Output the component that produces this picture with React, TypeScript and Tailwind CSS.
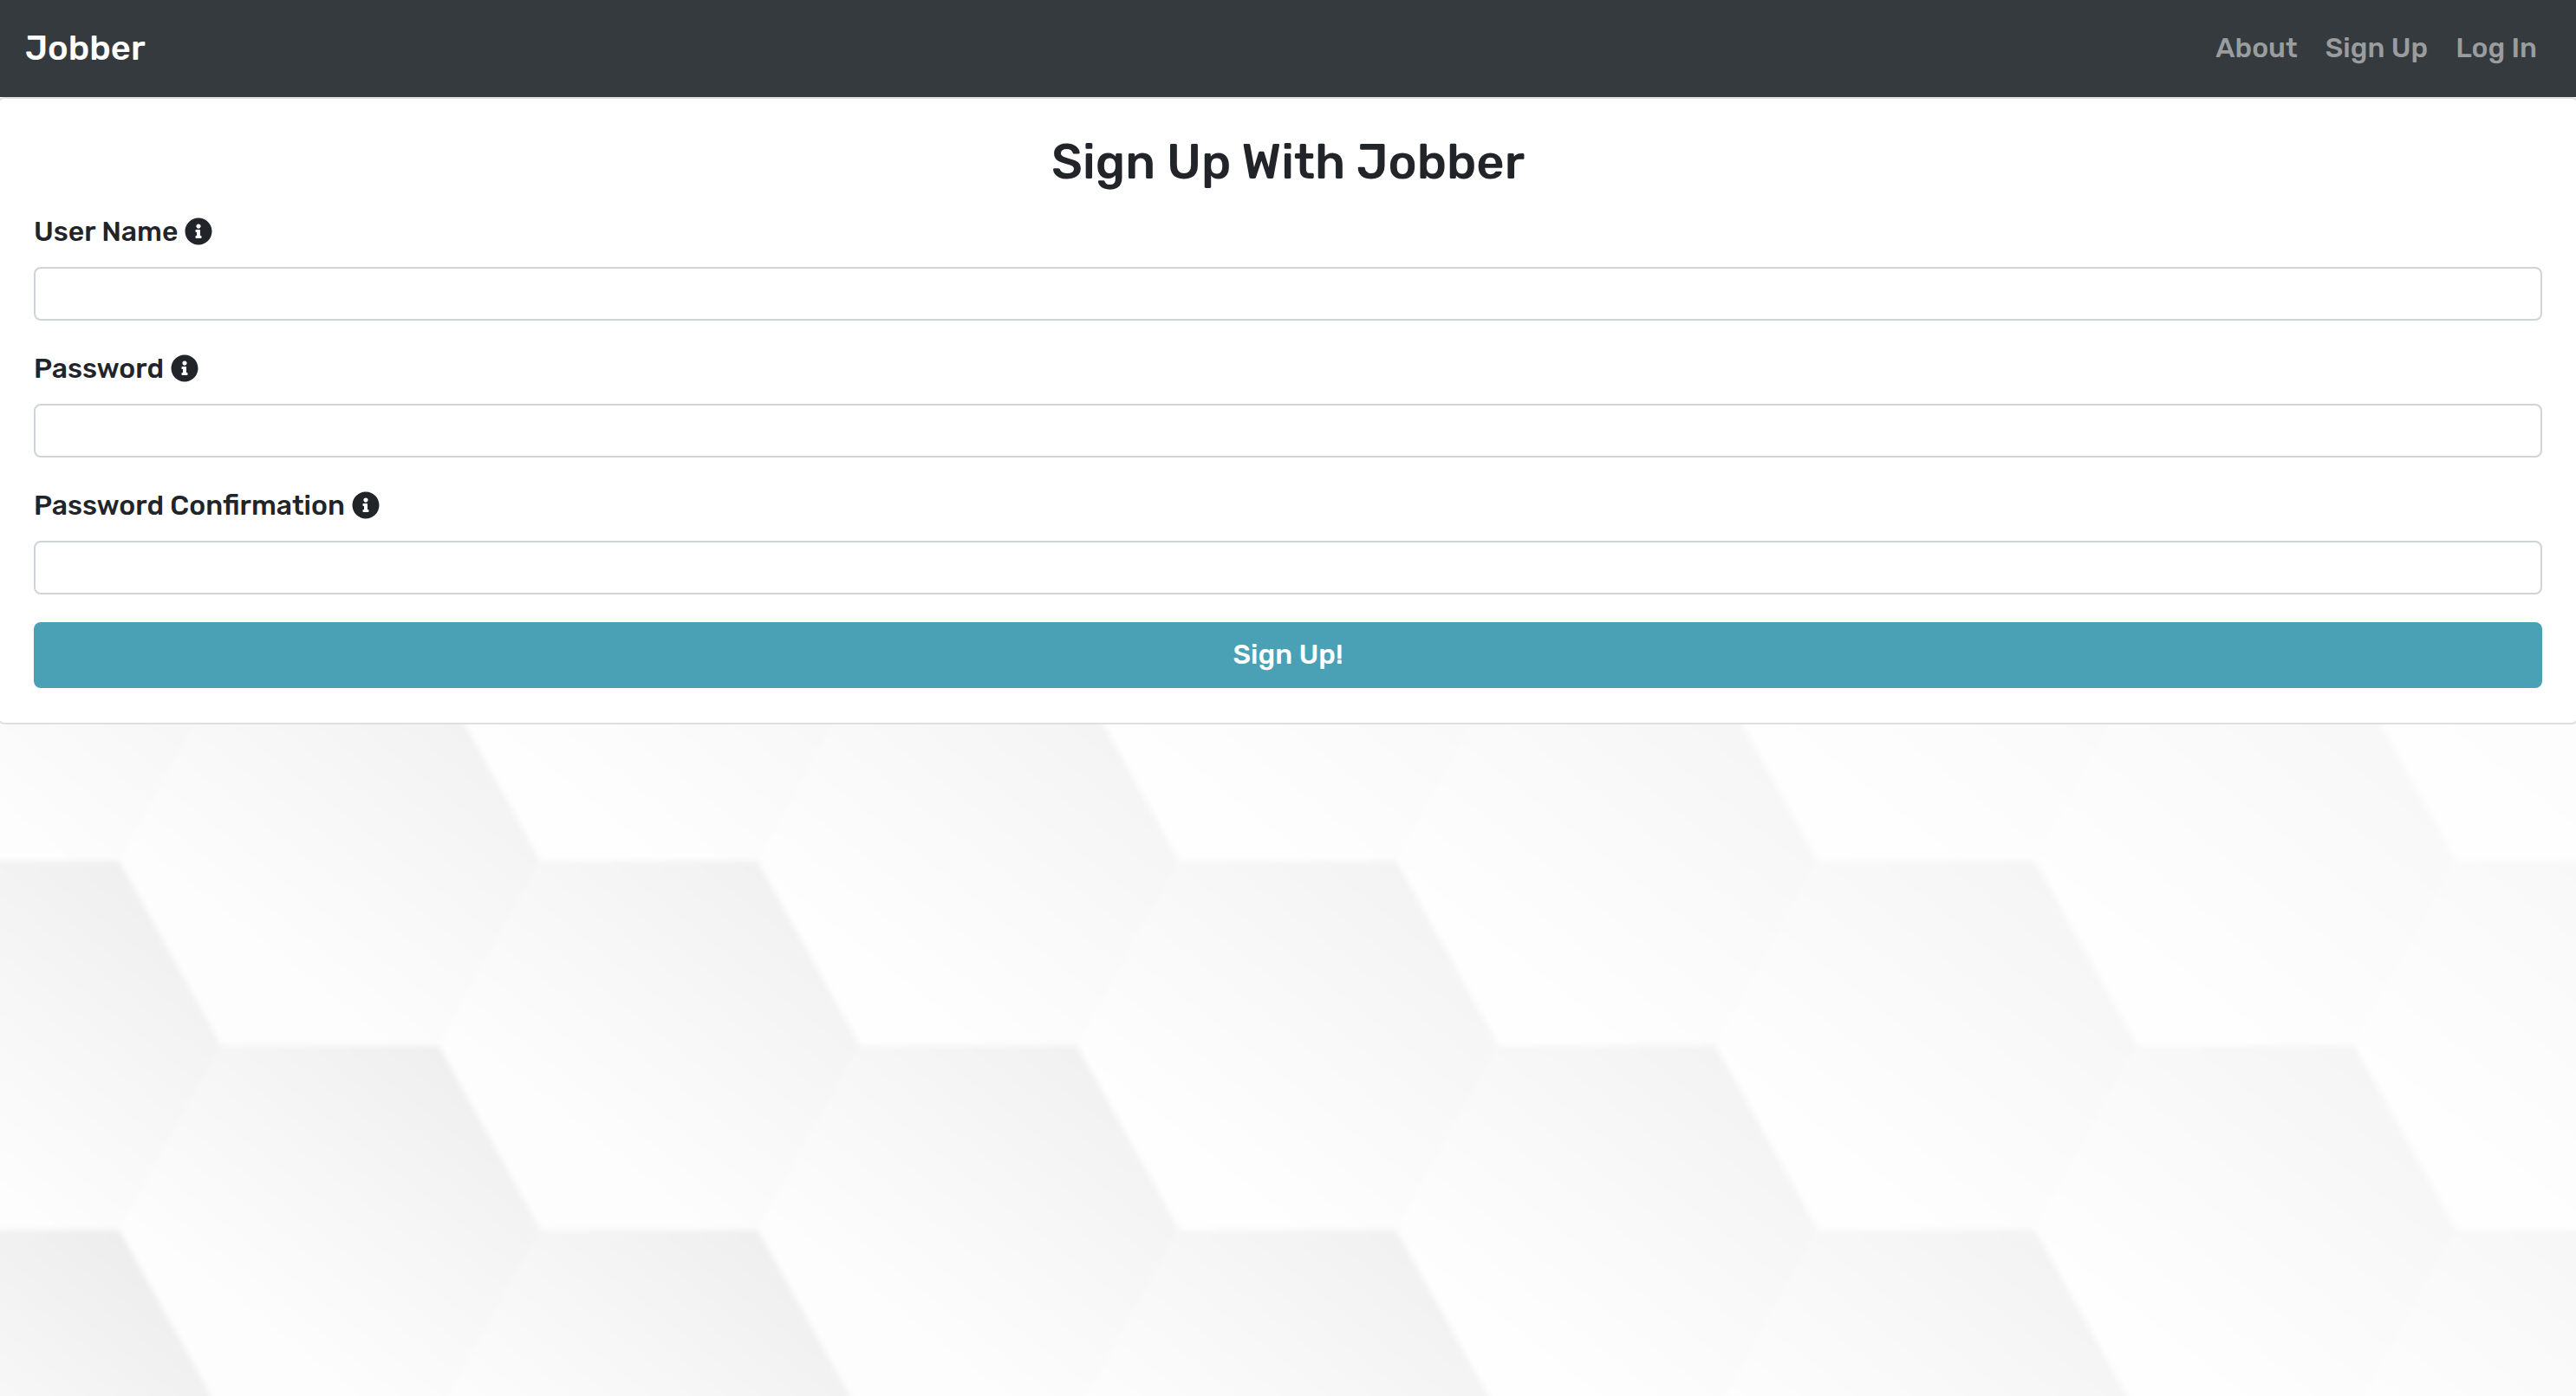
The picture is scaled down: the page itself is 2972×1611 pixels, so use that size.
import React from "react";
import { FaInfoCircle } from "react-icons/fa";

const COLUMN_STEP = 368.4;
const ROW_STEP = 425.6;

type Cell = { x: number; y: number; shade: number };

const cells: Cell[] = [];
for (let column = -1; column <= 7; column++) {
  for (let row = -1; row <= 2; row++) {
    const x = 381 + column * COLUMN_STEP;
    const y = 994 + row * ROW_STEP + (column % 2 === 0 ? 0 : ROW_STEP / 2);
    cells.push({ x, y, shade: 0.94 - (x / 2972) * 0.46 + (y - 1420) / 3200 });
  }
}

function HexBackdrop() {
  return (
    <svg
      aria-hidden="true"
      className="absolute inset-0 -z-10 h-full w-full"
      viewBox="0 0 2972 1611"
      preserveAspectRatio="xMidYMin slice"
    >
      <defs>
        <linearGradient id="shade" x1="0.88" y1="0.14" x2="0.3" y2="0.78">
          <stop offset="0" stopColor="#000" stopOpacity="0.066" />
          <stop offset="0.5" stopColor="#000" stopOpacity="0.032" />
          <stop offset="1" stopColor="#000" stopOpacity="0.003" />
        </linearGradient>
        <filter id="soften" x="0" y="0" width="1" height="1">
          <feGaussianBlur stdDeviation="3" />
        </filter>
      </defs>
      <rect width="2972" height="1611" fill="#fefefe" />
      <g filter="url(#soften)">
        {cells.map(({ x, y, shade }) => (
          <polygon
            key={`${x}-${y}`}
            fill="url(#shade)"
            opacity={shade}
            points={`${x - 125},${y - 213} ${x + 125},${y - 213} ${x + 243},${y} ${x + 125},${y + 213} ${x - 125},${y + 213} ${x - 243},${y}`}
          />
        ))}
      </g>
    </svg>
  );
}

const links = ["About", "Sign Up", "Log In"];

const fields = [
  { id: "username", label: "User Name", type: "text" },
  { id: "password", label: "Password", type: "password" },
  { id: "confirmation", label: "Password Confirmation", type: "password" },
];

export default function App() {
  return (
    <div className="relative isolate min-h-screen overflow-hidden font-['Rubik','Inter',sans-serif] text-[32px] leading-[48px] font-medium text-[#212529]">
      <HexBackdrop />
      <nav className="flex h-28 items-center justify-between bg-[#353a3e] px-[29px]">
        <a href="#home" className="text-[40px] text-white">
          Jobber
        </a>
        <ul className="flex pb-0.5">
          {links.map((link) => (
            <li key={link}>
              <a href="#nav" className="px-4 text-[#9a9c9e]">
                {link}
              </a>
            </li>
          ))}
        </ul>
      </nav>
      <main className="bg-white">
        <form className="-mx-[3px] rounded-lg border-2 border-[#dfdfdf] bg-white p-10">
          <h1 className="mb-6 text-center text-[56px] leading-[66px]">Sign Up With Jobber</h1>
          {fields.map(({ id, label, type }) => (
            <div key={id} className="mb-8">
              <label htmlFor={id} className="mb-[18px] flex items-center gap-2 leading-[46px]">
                {label}
                <FaInfoCircle className="size-8" />
              </label>
              <input
                id={id}
                type={type}
                className="block h-[62px] w-full rounded-lg border-2 border-[#ced4da] bg-white px-4"
              />
            </div>
          ))}
          <button type="button" className="block w-full rounded-lg bg-[#4aa1b5] pt-[13px] pb-[15px] text-white">
            Sign Up!
          </button>
        </form>
      </main>
    </div>
  );
}
